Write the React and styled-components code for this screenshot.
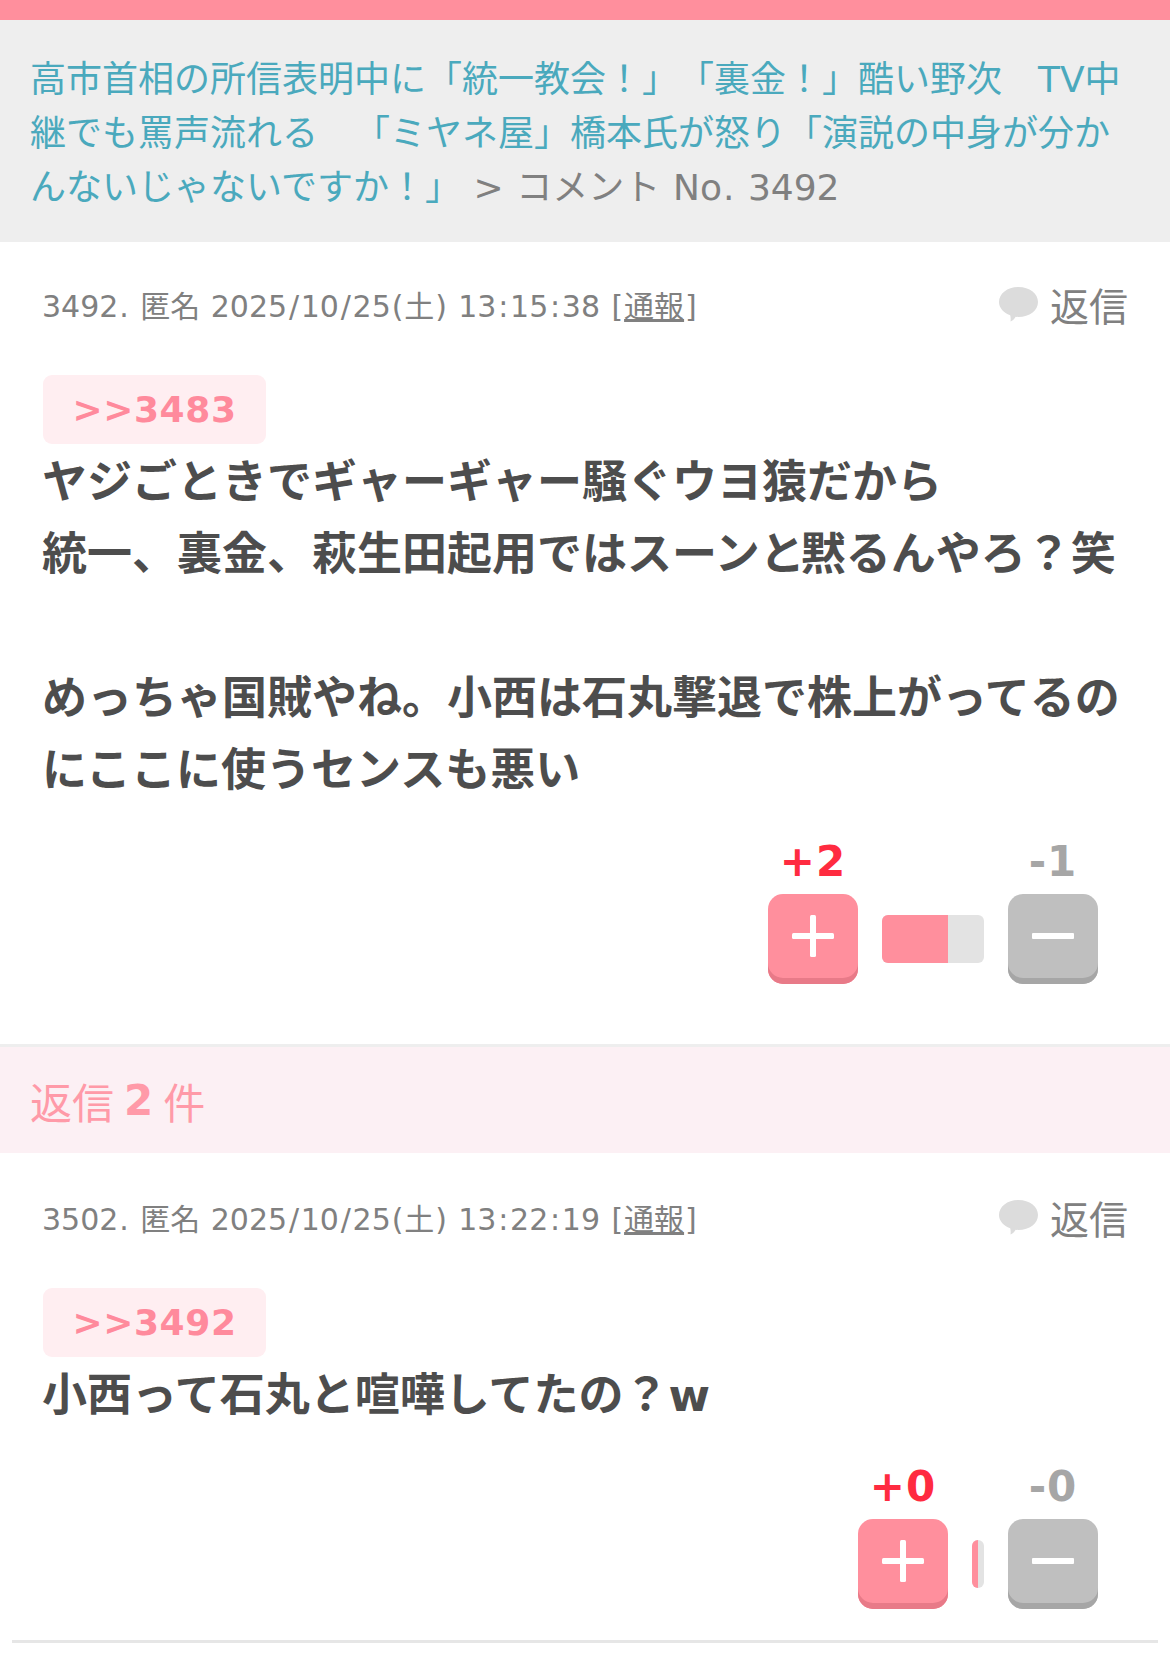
import styled, { createGlobalStyle } from 'styled-components'

const GlobalStyle = createGlobalStyle`
    html, body {
        margin: 0;
        padding: 0;
        background: #fff;
    }

    body {
        font-family: "DejaVu Sans", "Noto Sans CJK JP", sans-serif;
        text-spacing-trim: space-all;
    }
`

function PlusIcon () {
    return (
        <svg width="42" height="42" viewBox="0 0 42 42">
            <rect x="0" y="18" width="42" height="6" rx="1.5" fill="#fff"/>
            <rect x="18" y="0" width="6" height="42" rx="1.5" fill="#fff"/>
        </svg>
    )
}

function MinusIcon () {
    return (
        <svg width="42" height="42" viewBox="0 0 42 42">
            <rect x="0" y="18" width="42" height="6" rx="1" fill="#fff"/>
        </svg>
    )
}

function BubbleIcon () {
    return (
        <svg width="39" height="35" viewBox="0 0 39 35">
            <path d="M19.500 0C30.500 0 39 6.500 39 15C39 23.500 30.500 30 19.500 30C18.500 30 17.600 30 16.700 29.800C15.500 31.800 13.500 34 11.500 34.500C11.800 32.300 11.700 30 11.200 28.300C4.500 25.800 0 20.800 0 15C0 6.500 8.500 0 19.500 0Z" fill="#dcdcdc"/>
        </svg>
    )
}

// the date and time punctuation runs wider in the original face
function Spaced ({ text }) {
    return text.split(/([/:.()[\]])/).map((part, i) => (
        i % 2 ? <Punct key={i} $wide={'/:'.includes(part)}>{part}</Punct> : part
    ))
}

function Comment ({ no, date, anchor, lines, plus, minus, ratio, small, last }) {
    return (
        <Item $last={last}>
            <Meta>
                <MetaText>
                    <Spaced text={`${no}. `}/>匿名 <Spaced text={`${date} [`}/>
                    <Report>通報</Report><Spaced text="]"/>
                </MetaText>
                <Reply><BubbleIcon/>返信</Reply>
            </Meta>
            <Anchor>{anchor}</Anchor>
            <Body>
                {lines.map((line, i) => (
                    <BodyLine key={i}>{line || '\u00a0'}</BodyLine>
                ))}
            </Body>
            <Votes>
                <VoteColumn>
                    <Count $plus>+{plus}</Count>
                    <VoteButton $plus><PlusIcon/></VoteButton>
                </VoteColumn>
                <Meter $small={small}>
                    <MeterFill style={{ width: ratio }}/>
                </Meter>
                <VoteColumn>
                    <Count>-{minus}</Count>
                    <VoteButton><MinusIcon/></VoteButton>
                </VoteColumn>
            </Votes>
        </Item>
    )
}

export default function App () {
    return (
        <Page>
            <GlobalStyle/>
            <TopBar/>
            <Heading>
                <HeadingLink>
                    高市首相の所信表明中に「統一教会！」「裏金！」酷い野次　TV中継でも罵声流れる　「ミヤネ屋」橋本氏が怒り「演説の中身が分かんないじゃないですか！」
                </HeadingLink>
                <Crumb> &gt; コメント <Spaced text="No. 3492"/></Crumb>
            </Heading>
            <Comment
                no="3492"
                date="2025/10/25(土) 13:15:38"
                anchor=">>3483"
                lines={[
                    'ヤジごときでギャーギャー騒ぐウヨ猿だから',
                    <>統一、裏金、萩生田起用ではスーン<Tight>と</Tight>黙るんやろ？笑</>,
                    '',
                    'めっちゃ国賊やね。小西は石丸撃退で株上がってるのにここに使うセンスも悪い',
                ]}
                plus="2"
                minus="1"
                ratio="65%"
            />
            <ReplyBand>返信 <strong>2</strong> 件</ReplyBand>
            <Comment
                no="3502"
                date="2025/10/25(土) 13:22:19"
                anchor=">>3492"
                lines={['小西って石丸と喧嘩してたの？w']}
                plus="0"
                minus="0"
                ratio="50%"
                small
                last
            />
            <Rule/>
        </Page>
    )
}

const Page = styled.div`
    width: 1170px;
    height: 1670px;
    overflow: hidden;
    background: #fff;
`

const TopBar = styled.div`
    height: 20px;
    background: #ff8f9d;
`

const Heading = styled.div`
    height: 222px;
    box-sizing: border-box;
    padding: 33px 30px 0;
    background: #eeeeee;
    font-size: 36px;
    line-height: 54px;
`

const HeadingLink = styled.span`
    color: #4aa9bd;
`

const Crumb = styled.span`
    color: #808080;
    word-spacing: 1.2px;
`

const Item = styled.div`
    padding: ${props => (props.$last ? '39px 42px 31px' : '37px 42px 60px')};
`

const Meta = styled.div`
    display: flex;
    align-items: center;
    justify-content: space-between;
    height: 50px;
    margin-bottom: 46px;
`

const MetaText = styled.div`
    font-size: 30px;
    color: #808080;
    word-spacing: 1px;
`

const Punct = styled.span`
    padding: 0 ${props => (props.$wide ? '1.75px' : '0.9px')};
`

const Report = styled.span`
    text-decoration: underline;
`

const Reply = styled.div`
    display: flex;
    align-items: center;
    gap: 12px;
    font-size: 39px;
    color: #808080;
`

const Anchor = styled.div`
    display: flex;
    align-items: center;
    justify-content: center;
    width: 223px;
    height: 69px;
    margin-left: 1px;
    border-radius: 9px;
    background: #ffeef1;
    color: #ff8a9c;
    font-size: 36px;
    font-weight: bold;
    letter-spacing: 0.6px;
`

const Body = styled.div`
    color: #4d4d4d;
    font-size: 45px;
    font-weight: bold;
    line-height: 72px;
    margin-top: 3px;
`

const BodyLine = styled.div``

const Tight = styled.span`
    letter-spacing: -4px;
`

const Votes = styled.div`
    display: flex;
    align-items: flex-end;
    justify-content: flex-end;
    gap: 24px;
    margin-top: 30px;
    padding-right: 30px;
`

const VoteColumn = styled.div`
    display: flex;
    flex-direction: column;
    align-items: center;
    gap: 7px;
`

const Count = styled.div`
    color: ${props => (props.$plus ? '#ff2b40' : '#a6a6a6')};
    font-size: 42px;
    font-weight: bold;
    line-height: 50px;
    letter-spacing: 1px;
`

const VoteButton = styled.div`
    display: flex;
    align-items: center;
    justify-content: center;
    width: 90px;
    height: 90px;
    box-sizing: border-box;
    padding-bottom: 6px;
    border-radius: 15px;
    background: ${props => (props.$plus ? '#ff8f9d' : '#bfbfbf')};
    box-shadow: inset 0 -6px 0 ${props => (props.$plus ? '#e87a88' : '#a6a6a6')};
`

const Meter = styled.div`
    width: ${props => (props.$small ? '12px' : '102px')};
    height: 48px;
    margin-bottom: 21px;
    border-radius: 6px;
    overflow: hidden;
    background: #e3e3e3;
`

const MeterFill = styled.div`
    height: 100%;
    background: #ff8f9d;
`

const ReplyBand = styled.div`
    height: 109px;
    box-sizing: border-box;
    display: flex;
    align-items: center;
    gap: 10px;
    padding-left: 30px;
    border-top: 3px solid #eee;
    background: #fcf0f4;
    color: #ff9aa8;
    font-size: 42px;
`

const Rule = styled.div`
    height: 3px;
    margin: 0 12px;
    background: #e6e6e6;
`
